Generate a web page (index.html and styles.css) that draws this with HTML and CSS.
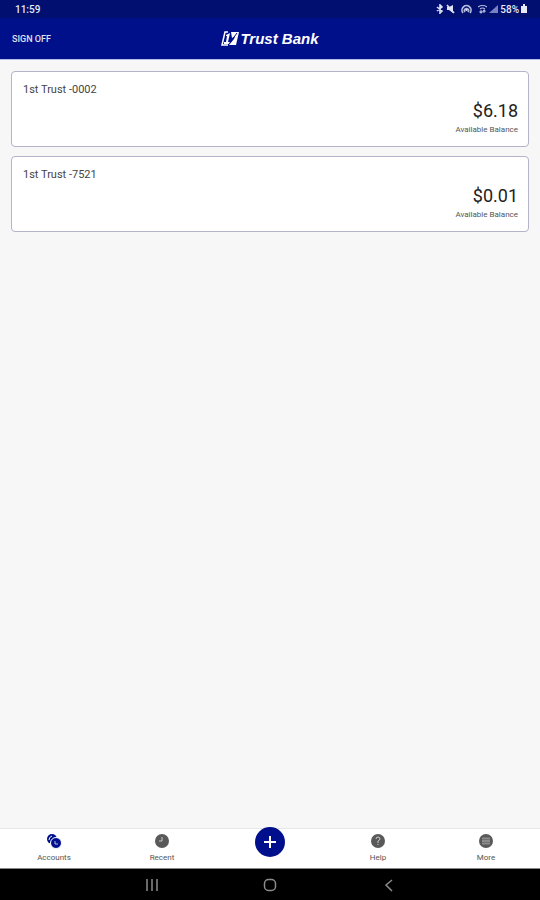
FILE: index.html
```html
<!DOCTYPE html>
<html lang="en">
<head>
  <meta charset="UTF-8" />
  <meta name="viewport" content="width=device-width, initial-scale=1" />
  <title>Trust Bank</title>
  <link rel="stylesheet" href="styles.css">
</head>
<body>

  <!-- Status bar -->
  <div class="status-bar">
    <span>11:59</span>
    <div class="status-icons">
      <svg width="8" height="10" viewBox="0 0 8 10"><path d="M1 3l5 4-2 2V1l2 2-5 4" fill="none" stroke="#dfe2f3" stroke-width="1.6"/></svg>
      <svg width="9" height="10" viewBox="0 0 9 10"><path d="M1 3h2l4-2v8L3 6H1z" fill="#dfe2f3"/><path d="M1 1l7 8" stroke="#dfe2f3" stroke-width="1.6"/></svg>
      <svg class="hotspot" width="11" height="10" viewBox="0 0 11 10"><path d="M2 9a4.500 4.500 0 1 1 7 0M4 8a2 2 0 1 1 3 0" fill="none" stroke="#b4bae0" stroke-width="1.700"/><circle cx="5.500" cy="6" r="1" fill="#dfe2f3"/></svg>
      <svg width="9" height="10" viewBox="0 0 9 10"><path d="M0 3q4.500-3 9 0M2 5q2.500-2 5 0M3 6v3M1.500 7.500L3 9l1.500-1.500M6 9V6M4.800 7.500L6 6l1.500 1.500" fill="none" stroke="#b4bae0" stroke-width="1.100"/></svg>
      <svg width="9" height="10" viewBox="0 0 9 10"><path d="M9 1v8H0z" fill="#7a83c2"/></svg>
      <span>58%</span>
      <svg width="6" height="10" viewBox="0 0 6 10"><path d="M2 0h2v2h2v7H0V2h2z" fill="#e8eaf6"/></svg>
    </div>
  </div>

  <!-- Header -->
  <header class="header">
    <button class="sign-off">SIGN OFF</button>
    <div class="logo">
      <svg width="19" height="15" viewBox="0 0 19 15">
        <path d="M7 1H4L1 14h6" fill="none" stroke="#fff" stroke-width="1.500"/>
        <path d="M5 4l4-2-2 9h2v2H3v-2h2l1-6H5z" fill="#fff"/>
        <path d="M10 1h8l-3 13H8l5-6 1-3-3 2z" fill="#fff"/>
        <path d="M16 2L8 13" stroke="#00108a" stroke-width="1"/>
      </svg>
      <span>Trust Bank</span>
    </div>
  </header>

  <!-- Accounts -->
  <main class="accounts">
    <section class="account">
      <h2>1st Trust -0002</h2>
      <p class="balance">$6.18</p>
      <p class="balance-label">Available Balance</p>
    </section>
    <section class="account">
      <h2>1st Trust -7521</h2>
      <p class="balance">$0.01</p>
      <p class="balance-label">Available Balance</p>
    </section>
  </main>

  <!-- Tabs -->
  <nav class="tabs">
    <a href="#accounts" class="tab">
      <svg width="16" height="16" viewBox="0 0 16 16">
        <circle cx="6" cy="6" r="5" fill="#000f8c"/>
        <circle cx="10" cy="10" r="5.500" fill="#000f8c" stroke="#fff" stroke-width="1"/>
        <path d="M3 7q0-3 3-4" fill="none" stroke="#fff" stroke-width="1"/>
        <path d="M9 8v3h3" fill="none" stroke="#b9bfe6" stroke-width="1"/>
      </svg>
      <span>Accounts</span>
    </a>
    <a href="#recent" class="tab">
      <svg width="16" height="16" viewBox="0 0 16 16">
        <circle cx="8" cy="8" r="7" fill="#595959"/>
        <path d="M8 4v4H5" fill="none" stroke="#ccc" stroke-width="1"/>
      </svg>
      <span>Recent</span>
    </a>
    <div class="tab">
      <button class="add" aria-label="Add">
        <svg width="14" height="14" viewBox="0 0 14 14"><path d="M7 1v12M1 7h12" stroke="#fff" stroke-width="2"/></svg>
      </button>
    </div>
    <a href="#help" class="tab">
      <svg width="16" height="16" viewBox="0 0 16 16">
        <circle cx="8" cy="8" r="7" fill="#595959"/>
        <path d="M6 6q0-2 2-2t2 2q0 1-2 2v2M8 11v1" fill="none" stroke="#ccc" stroke-width="1"/>
      </svg>
      <span>Help</span>
    </a>
    <a href="#more" class="tab">
      <svg width="16" height="16" viewBox="0 0 16 16">
        <circle cx="8" cy="8" r="7" fill="#595959"/>
        <path d="M4 5.500h8M4 8h8M4 10.500h8" stroke="#8c8c8c" stroke-width="1.800"/>
      </svg>
      <span>More</span>
    </a>
  </nav>

  <!-- System buttons -->
  <div class="system-bar">
    <button aria-label="Recent apps"><svg width="14" height="14" viewBox="0 0 14 14"><path d="M2 1v12M7 1v12M12 1v12" stroke="#8c8c8c" stroke-width="1.500"/></svg></button>
    <button aria-label="Home"><svg width="14" height="14" viewBox="0 0 14 14"><rect x="1.500" y="1.500" width="11" height="11" rx="4" fill="none" stroke="#8c8c8c" stroke-width="1.500"/></svg></button>
    <button aria-label="Back"><svg width="14" height="14" viewBox="0 0 14 14"><path d="M11 2L5 7l6 6" fill="none" stroke="#8c8c8c" stroke-width="1.500"/></svg></button>
  </div>

</body>
</html>
```

FILE: styles.css
```css
body {
  margin: 0;
  min-height: 100vh;
  display: flex;
  flex-direction: column;
  font-family: Roboto, sans-serif;
  background-color: #f7f7f8;
  color: #444;
}

svg {
  display: block;
}

button {
  padding: 0;
  border: none;
  background: none;
  font-family: inherit;
  cursor: pointer;
}

.status-bar {
  display: flex;
  justify-content: space-between;
  align-items: center;
  height: 18px;
  padding: 0 13px 0 15px;
  background-color: #000f70;
  color: #e8eaf6;
  font-size: 10px;
  font-weight: 500;
}

.status-icons {
  display: flex;
  align-items: center;
  gap: 2px;
}

.hotspot {
  margin: 0 4px;
}

.header {
  display: grid;
  grid-template-columns: 1fr auto 1fr;
  align-items: center;
  height: 41px;
  padding: 0 12px;
  background-color: #00108a;
  border-bottom: 1px solid #b8bce6;
}

.sign-off {
  justify-self: start;
  color: #e0e2ee;
  font-size: 9px;
  font-weight: 500;
}

.logo {
  display: flex;
  align-items: center;
  color: #fff;
  font-family: "Liberation Sans", Arial, sans-serif;
  font-size: 15px;
  font-weight: 900;
  font-style: italic;
}

.accounts {
  flex: 1;
  display: flex;
  flex-direction: column;
  gap: 9px;
  padding: 11px;
}

.account {
  padding: 10px;
  border: 1px solid #b3b3ca;
  border-radius: 4px;
  background-color: #fff;
}

.account h2 {
  margin: 0;
  padding-left: 1px;
  font-size: 11px;
  font-weight: 400;
  line-height: 16px;
}

.account p {
  margin: 0;
  text-align: right;
}

.account .balance {
  color: #222;
  font-size: 18px;
  line-height: 26px;
}

.account .balance-label {
  color: #555;
  font-size: 8px;
  line-height: 12px;
}

.tabs {
  display: grid;
  grid-template-columns: repeat(5, 1fr);
  height: 39px;
  background-color: #fff;
  border-top: 1px solid #e6e6e6;
}

.tab {
  display: flex;
  flex-direction: column;
  align-items: center;
  gap: 3px;
  padding-top: 4px;
  color: #555;
  font-size: 8px;
  line-height: 12px;
  text-decoration: none;
}

.add {
  display: flex;
  align-items: center;
  justify-content: center;
  width: 30px;
  height: 30px;
  margin-top: -6px;
  border-radius: 50%;
  background-color: #000f8c;
}

.system-bar {
  display: flex;
  align-items: center;
  justify-content: center;
  gap: 104px;
  height: 31px;
  border-top: 1px solid #888;
  background-color: #000;
}
```
